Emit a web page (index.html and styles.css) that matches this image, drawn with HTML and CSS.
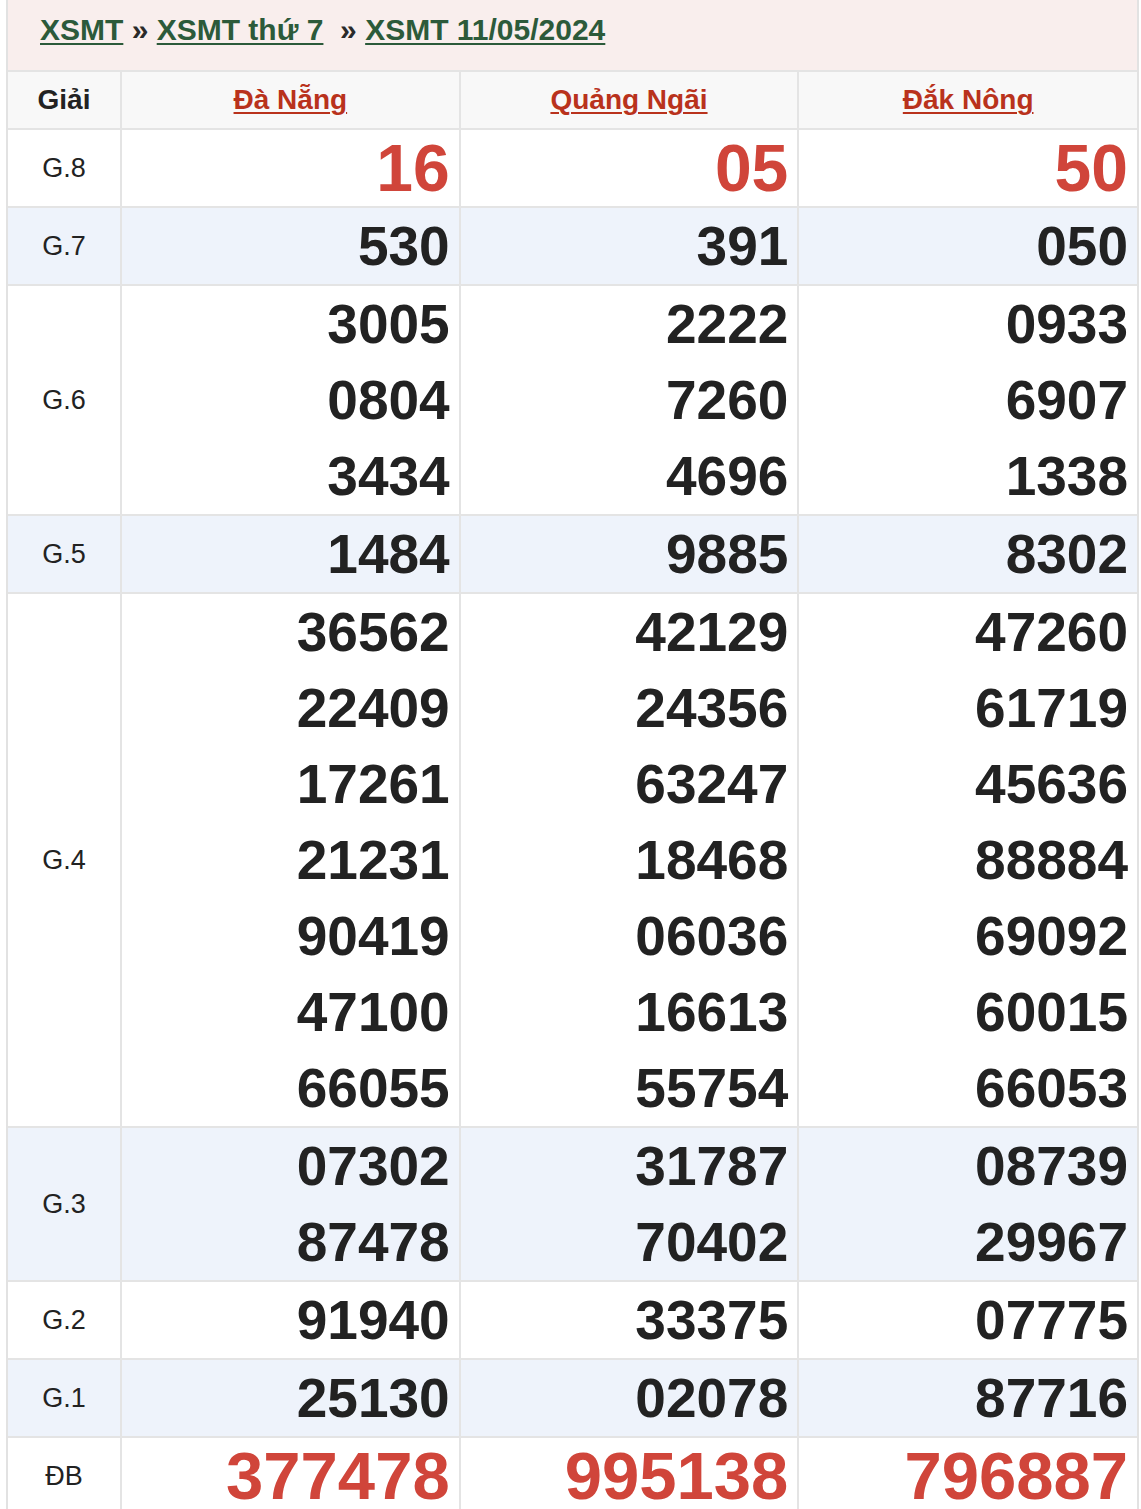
FILE: index.html
```html
<!DOCTYPE html>
<html lang="vi">
<head>
<meta charset="utf-8">
<title>XSMT 11/05/2024</title>
<link rel="stylesheet" href="styles.css">
</head>
<body>
<div class="box">
  <div class="crumb">
    <a href="#">XSMT</a> » <a href="#">XSMT thứ 7</a>&nbsp; » <a href="#">XSMT 11/05/2024</a>
  </div>
  <table class="kq">
    <colgroup>
      <col class="c-giai"><col class="c-dai"><col class="c-dai"><col class="c-dai">
    </colgroup>
    <thead>
      <tr>
        <th class="giai">Giải</th>
        <th><a href="#">Đà Nẵng</a></th>
        <th><a href="#">Quảng Ngãi</a></th>
        <th><a href="#">Đắk Nông</a></th>
      </tr>
    </thead>
    <tbody>
      <tr>
        <td class="lbl">G.8</td>
        <td class="num big"><div>16</div></td>
        <td class="num big"><div>05</div></td>
        <td class="num big"><div>50</div></td>
      </tr>
      <tr class="alt">
        <td class="lbl">G.7</td>
        <td class="num"><div>530</div></td>
        <td class="num"><div>391</div></td>
        <td class="num"><div>050</div></td>
      </tr>
      <tr>
        <td class="lbl">G.6</td>
        <td class="num"><div>3005</div><div>0804</div><div>3434</div></td>
        <td class="num"><div>2222</div><div>7260</div><div>4696</div></td>
        <td class="num"><div>0933</div><div>6907</div><div>1338</div></td>
      </tr>
      <tr class="alt">
        <td class="lbl">G.5</td>
        <td class="num"><div>1484</div></td>
        <td class="num"><div>9885</div></td>
        <td class="num"><div>8302</div></td>
      </tr>
      <tr>
        <td class="lbl">G.4</td>
        <td class="num"><div>36562</div><div>22409</div><div>17261</div><div>21231</div><div>90419</div><div>47100</div><div>66055</div></td>
        <td class="num"><div>42129</div><div>24356</div><div>63247</div><div>18468</div><div>06036</div><div>16613</div><div>55754</div></td>
        <td class="num"><div>47260</div><div>61719</div><div>45636</div><div>88884</div><div>69092</div><div>60015</div><div>66053</div></td>
      </tr>
      <tr class="alt">
        <td class="lbl">G.3</td>
        <td class="num"><div>07302</div><div>87478</div></td>
        <td class="num"><div>31787</div><div>70402</div></td>
        <td class="num"><div>08739</div><div>29967</div></td>
      </tr>
      <tr>
        <td class="lbl">G.2</td>
        <td class="num"><div>91940</div></td>
        <td class="num"><div>33375</div></td>
        <td class="num"><div>07775</div></td>
      </tr>
      <tr class="alt">
        <td class="lbl">G.1</td>
        <td class="num"><div>25130</div></td>
        <td class="num"><div>02078</div></td>
        <td class="num"><div>87716</div></td>
      </tr>
      <tr>
        <td class="lbl">ĐB</td>
        <td class="num big db"><div>377478</div></td>
        <td class="num big db"><div>995138</div></td>
        <td class="num big db"><div>796887</div></td>
      </tr>
    </tbody>
  </table>
</div>
</body>
</html>
```

FILE: styles.css
```css
html, body {
  margin: 0;
  padding: 0;
  background: #ffffff;
}

body {
  font-family: "Liberation Sans", Arial, sans-serif;
  color: #222222;
}

.box {
  margin-left: 6px;
  width: 1133px;
  box-sizing: border-box;
  border-left: 2px solid #e2e2e2;
  border-right: 2px solid #e2e2e2;
}

.crumb {
  background: #f9eeed;
  height: 70px;
  box-sizing: border-box;
  padding: 10px 0 0 32px;
  font-size: 30px;
  font-weight: bold;
  line-height: 40px;
  color: #2a2a2a;
  white-space: nowrap;
}

.crumb a {
  color: #2c5a3a;
  text-decoration: underline;
  text-decoration-thickness: 2px;
  text-underline-offset: 3px;
}

.kq {
  width: 100%;
  border-collapse: collapse;
  table-layout: fixed;
}

.c-giai { width: 113px; }

.kq th,
.kq td {
  border: 2px solid #e4e4e4;
  padding: 0;
}

.kq tr > :first-child { border-left: none; }
.kq tr > :last-child { border-right: none; }

.kq thead th {
  background: #f8f8f8;
  height: 56px;
  font-size: 28px;
  font-weight: bold;
  text-align: center;
  vertical-align: middle;
}

.kq thead th.giai { color: #222222; }

.kq thead th a {
  color: #b9321c;
  text-decoration: underline;
  text-decoration-thickness: 2px;
  text-underline-offset: 3px;
}

.kq tr.alt td { background: #eef3fb; }

.lbl {
  text-align: center;
  vertical-align: middle;
  font-size: 27px;
  color: #222222;
}

.num {
  text-align: right;
  padding-right: 9px !important;
  font-size: 55px;
  font-weight: bold;
  line-height: 76px;
  color: #222222;
}

.num.big {
  font-size: 66px;
  color: #d0453a;
}

.num.db {
  font-size: 67px;
}
```
